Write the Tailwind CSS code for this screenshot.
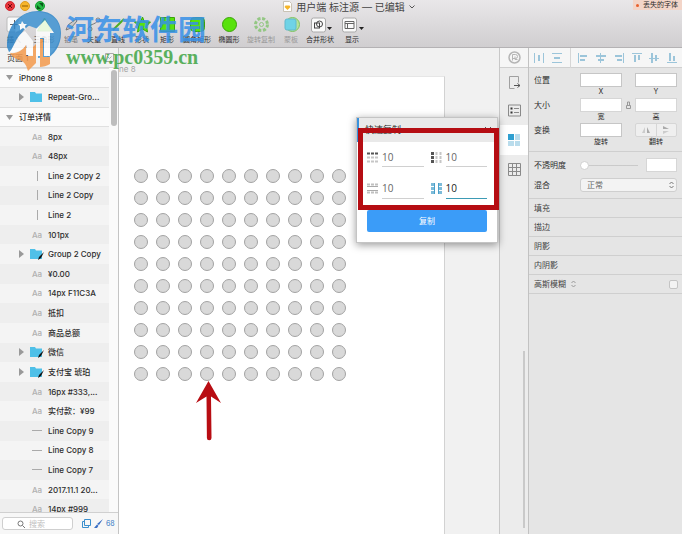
<!DOCTYPE html>
<html lang="zh-CN">
<head>
    <meta charset="UTF-8">
    <meta name="viewport" content="width=device-width, initial-scale=1.0">
    <title>用户端 标注源</title>
    <script src="https://cdn.jsdelivr.net/npm/@tailwindcss/browser@4"></script>
</head>
<body class="h-screen flex flex-col overflow-hidden bg-[#f0f0f0] text-[8px] leading-[10px] text-[#2c2c2c] font-['Inter','Noto_Sans_CJK_SC',sans-serif]">

<!-- Title bar and toolbar -->
<header class="relative shrink-0 h-12 border-b border-[#b4b2b4] bg-linear-to-b from-[#e9e7e9] to-[#d0ced0]">
    <div class="relative flex items-center justify-center h-3 pl-4">
        <div class="absolute left-[5px] top-[1px] flex gap-[5px]">
            <button aria-label="关闭" class="size-[10px] rounded-full bg-[#e8353c] border border-[#cf2830] flex items-center justify-center"><svg class="size-[6px]" viewBox="0 0 6 6" stroke="#6d0a0d"><path d="M1 1l4 4M5 1L1 5"/></svg></button>
            <button aria-label="最小化" class="size-[10px] rounded-full bg-[#f7b52d] border border-[#dd9b22] flex items-center justify-center"><svg class="size-[6px]" viewBox="0 0 6 6" stroke="#8f5a00"><path d="M0 3h6"/></svg></button>
            <button aria-label="全屏" class="size-[10px] rounded-full bg-[#24b945] border border-[#189c35] flex items-center justify-center"><svg class="size-[6px]" viewBox="0 0 6 6" fill="#075c18"><path d="M2 0h4v4zM0 2v4h4z"/></svg></button>
        </div>
        <h1 class="flex items-center gap-1 text-[10px] text-[#444] pt-[1px]">
            <svg class="w-[9px] h-[11px]" viewBox="0 0 9 11"><path d="M.5.5h6l2 2v8h-8z" fill="#fff" stroke="#c9c2b4"/><path d="M2.500 4.500h4l1 1.500-3 3-3-3z" fill="#f6b52a"/></svg>
            <span>用户端 标注源 — 已编辑</span>
            <svg class="w-[6px] h-1" viewBox="0 0 6 4" fill="none" stroke="#555"><path d="M.5.5L3 3 5.500.5"/></svg>
        </h1>
        <div class="absolute right-0 top-0 h-[10px] pl-[3px] pr-1 flex items-center gap-1 bg-[#f3d5c8] text-[7px]"><span class="size-[3px] rounded-full bg-[#e8602c]"></span>丢失的字体</div>
    </div>
    <nav class="flex pt-1 text-[7px] leading-[9px] whitespace-nowrap">
        <button class="w-7 flex flex-col items-center gap-[2px]"><svg class="size-[17px]" viewBox="0 0 17 17"><rect x="1" y="1" width="15" height="15" rx="2" fill="#fafafa" stroke="#bbb"/><path d="M8.500 4v9M4 8.500h9" stroke="#666"/></svg>插入</button>
        <button class="w-8 flex flex-col items-center gap-[2px]"><svg class="size-[17px]" viewBox="0 0 17 17"><path d="M8.500 2l7 13h-14z" fill="#67e01b" stroke="#45a511"/></svg>三角形</button>
        <button class="w-[22px] flex flex-col items-center gap-[2px] text-[#777]"><svg class="size-[17px]" viewBox="0 0 17 17"><path d="M3 14l2-5 8-6 1 2-6 7z" fill="#c9c9c9" stroke="#777"/></svg>铅笔</button>
        <button class="w-6 flex flex-col items-center gap-[2px]"><svg class="size-[17px]" viewBox="0 0 17 17" fill="#fff" stroke="#777"><path d="M3 14C3 6 8 11 13 3" fill="none"/><circle cx="4" cy="13" r="2"/><circle cx="12" cy="4" r="2"/></svg>矢量</button>
        <button class="w-6 flex flex-col items-center gap-[2px]"><svg class="size-[17px]" viewBox="0 0 17 17"><path d="M3 14L14 3" stroke="#4fae22" stroke-width="2"/></svg>直线</button>
        <button class="w-6 flex flex-col items-center gap-[2px]"><svg class="size-[17px]" viewBox="0 0 17 17"><path d="M8.500 1l2 5 6 0-4 4 1 6-5-3-5 3 1-6-4-4h6z" fill="#58e20d" stroke="#3ba508"/></svg>形状</button>
        <button class="w-[26px] flex flex-col items-center gap-[2px]"><svg class="size-[17px]" viewBox="0 0 17 17"><path d="M1.500 1.500h14v14h-14z" fill="#58e20d" stroke="#3ba508"/></svg>矩形</button>
        <button class="w-[34px] flex flex-col items-center gap-[2px]"><svg class="size-[17px]" viewBox="0 0 17 17"><rect x="1.500" y="1.500" width="14" height="14" rx="4" fill="#58e20d" stroke="#3ba508"/></svg>圆角矩形</button>
        <button class="w-[30px] flex flex-col items-center gap-[2px]"><svg class="size-[17px]" viewBox="0 0 17 17"><circle cx="8.500" cy="8.500" r="7" fill="#58e20d" stroke="#3ba508"/></svg>椭圆形</button>
        <button class="w-[34px] flex flex-col items-center gap-[2px] text-[#999]"><svg class="size-[17px]" viewBox="0 0 17 17" fill="none" stroke="#93c783"><circle cx="8.500" cy="8.500" r="6" stroke-width="3" stroke-dasharray="3 1.700"/><circle cx="8.500" cy="8.500" r="2"/></svg>旋转复制</button>
        <button class="w-[26px] flex flex-col items-center gap-[2px] text-[#999]"><svg class="size-[17px]" viewBox="0 0 17 17"><circle cx="9.500" cy="8.500" r="7" fill="#b5e39b" stroke="#7fc264"/><rect x="2" y="3" width="11" height="11" rx="2" fill="#6fd3e6" stroke="#62b9cd"/></svg>蒙板</button>
        <button class="w-8 flex flex-col items-center gap-[2px]"><svg class="w-[23px] h-[17px]" viewBox="0 0 23 17"><rect x="2.500" y="2" width="14" height="14" rx="2" fill="#fafafa" stroke="#aaa"/><rect x="5.500" y="7" width="5" height="5" fill="none" stroke="#444"/><circle cx="10.500" cy="8" r="3" fill="none" stroke="#444"/><path d="M18 11h5l-2.500 3z" fill="#222"/></svg>合并形状</button>
        <button class="w-8 flex flex-col items-center gap-[2px]"><svg class="w-[23px] h-[17px]" viewBox="0 0 23 17"><rect x="1.500" y="2" width="14" height="14" rx="2" fill="#fafafa" stroke="#aaa"/><path d="M4 5.500h9v7H4zM4 7.500h9M6.500 7.500v5" fill="none" stroke="#666"/><path d="M18 11h5l-2.500 3z" fill="#222"/></svg>显示</button>
    </nav>
</header>

<main class="relative flex flex-1 min-h-0">
    <!-- Layers -->
    <aside class="w-[119px] shrink-0 flex flex-col bg-[#fafafa] border-r border-[#c4c4c4]">
        <div class="h-5 shrink-0 flex items-center justify-between pl-[7px] pr-1 bg-[#f3f3f3] border-b border-[#d6d6d6]">页面 1
            <svg class="size-[9px]" viewBox="0 0 9 9" fill="none" stroke="#aaa"><path d="M.5.500h8v8h-8zM2.500 3.500l2 2 2-2"/></svg>
        </div>
        <div class="flex flex-1 min-h-0 overflow-hidden">
            <ul id="layers" class="flex-1 min-w-0 h-[451px] grid auto-rows-fr font-medium"></ul>
            <div class="w-[9px] flex justify-center pt-[2px]"><div class="w-[6px] h-[56px] rounded-full bg-[#bdbdbd]"></div></div>
        </div>
        <div class="h-[22px] shrink-0 flex items-center gap-[3px] pl-[2px] pr-1 bg-[#f7f7f7] border-t border-[#d0d0d0] text-[#3477c4]">
            <label class="flex items-center gap-1 w-[71px] h-[13px] pl-[14px] shrink-0 rounded-[3px] border border-[#cfcfcf] bg-white mr-[6px]">
                <svg class="size-2 shrink-0" viewBox="0 0 8 8" fill="none" stroke="#777"><circle cx="3.500" cy="3.500" r="2.500"/><path d="M5.500 5.500L8 8"/></svg>
                <input type="text" aria-label="搜索" placeholder="搜索" class="w-10 outline-none placeholder:text-[#c0c0c0]">
            </label>
            <svg class="size-[9px] shrink-0" viewBox="0 0 9 9" fill="none" stroke="#3b8fcd"><path d="M2.500.5h6v6h-6z"/><path d="M2.500 2.500h-2v6h6v-2"/></svg>
            <svg class="size-[9px] shrink-0" viewBox="0 0 9 9"><path d="M9 0L5 6 3 5zM3 5.500l1.500 1.200L3 9H0z" fill="#3b6fc5"/></svg>
            <span class="text-[7px]">68</span>
        </div>
    </aside>

    <!-- Canvas -->
    <section class="relative flex-1 min-w-0 flex flex-col bg-[#f1f1f1] overflow-hidden">
        <div class="h-7 shrink-0 flex items-end pb-[2px] text-[#a5a5a5]">ne 8</div>
        <div class="flex-1 mr-[54px] bg-white border-r border-t border-t-[#e6e6e6] border-r-[#d2d2d2] pt-[92px] pl-[15px]">
            <div id="dots" class="w-[212px] h-[212px] grid grid-cols-[repeat(10,14px)] justify-between content-between"></div>
            <svg class="w-[26px] h-[60px] ml-[62px]" viewBox="0 0 26 60"><path d="M12.500 0L25 22 15 15.500 15.500 57a2.300 2.300 0 0 1-4.600 0L10.500 15.500 0 22z" fill="#b80d13"/></svg>
        </div>
    </section>

    <!-- Plugin strip -->
    <nav class="w-[29px] shrink-0 flex flex-col items-center bg-[#ececec] border-l border-[#c8c8c8]">
        <button aria-label="插件" class="w-full h-5 flex items-center justify-center bg-[#f6f6f6] border-b border-[#cfcfcf]"><svg class="size-[13px]" viewBox="0 0 13 13" fill="none" stroke="#b5b5b5"><circle cx="6.500" cy="6.500" r="5.500" stroke-width="1.500"/><path d="M4.500 9.500v-6h3a2 2 0 0 1 0 4h-3M7 5.500v3h2.500"/></svg></button>
        <button aria-label="导出" class="w-full h-[28px] flex items-center justify-center"><svg class="size-[13px]" viewBox="0 0 13 13" fill="none" stroke="#a0a0a0"><path d="M10.500 6.500v-6h-9v12h5" /><path d="M6 9.500h6M9.500 7.500l2.500 2-2.500 2" stroke="#555"/></svg></button>
        <button aria-label="列表" class="w-full h-[29px] flex items-center justify-center"><svg class="size-[13px]" viewBox="0 0 13 13" fill="none" stroke="#8a8a8a"><path d="M.5 1h12v11H.5z"/><path d="M6 4.500h5M6 8.500h5"/><path d="M2.500 4.500h2M2.500 8.500h2" stroke="#333" stroke-width="2"/></svg></button>
        <button aria-label="快速复制" class="w-full h-[30px] flex items-center justify-center bg-white"><svg class="size-[12px]" viewBox="0 0 12 12" fill="#b9dcec"><path d="M0 0h6v6H0z" fill="#2f9fd0"/><path d="M7 0h5v6H7zM0 7h6v5H0zM7 7h5v5H7z"/></svg></button>
        <button aria-label="网格" class="w-full h-[29px] flex items-center justify-center"><svg class="size-[13px]" viewBox="0 0 13 13" fill="none" stroke="#8a8a8a"><path d="M.5.500h12v12H.5zM4.500 0v13M8.500 0v13M0 4.500h13M0 8.500h13"/></svg></button>
        <div class="mt-auto mb-[6px] mr-[3px] w-[2px] h-[177px] self-end bg-[#c9c9c9]"></div>
    </nav>

    <!-- Inspector -->
    <aside class="w-[154px] shrink-0 bg-[#e5e5e5] border-l border-[#c2c2c2]">
        <div class="h-5 flex items-center justify-between px-[5px] bg-[#f6f6f6] border-b border-[#d0d0d0]">
            <button aria-label="水平分布"><svg class="size-[10px]" viewBox="0 0 10 10" fill="#9cc5da"><path d="M0 0h1v10H0zM9 0h1v10H9zM4 2h2v6H4z"/></svg></button>
            <button aria-label="垂直分布"><svg class="size-[10px]" viewBox="0 0 10 10" fill="#9cc5da"><path d="M0 0h10v1H0zM0 9h10v1H0zM2 4h6v2H2z"/></svg></button>
            <span class="w-px h-5 bg-[#d6d6d6]"></span>
            <button aria-label="左对齐"><svg class="size-[10px]" viewBox="0 0 10 10" fill="#9cc5da"><path d="M0 0h1v10H0zM2 2h7v2H2zM2 6h5v2H2z"/></svg></button>
            <button aria-label="水平居中"><svg class="size-[10px]" viewBox="0 0 10 10" fill="#9cc5da"><path d="M4 0h1v10H4zM0 2h10v2H0zM2 6h6v2H2z"/></svg></button>
            <button aria-label="右对齐"><svg class="size-[10px]" viewBox="0 0 10 10" fill="#9cc5da"><path d="M9 0h1v10H9zM1 2h7v2H1zM3 6h5v2H3z"/></svg></button>
            <button aria-label="顶对齐"><svg class="size-[10px]" viewBox="0 0 10 10" fill="#9cc5da"><path d="M0 0h10v1H0zM2 2h2v7H2zM6 2h2v5H6z"/></svg></button>
            <button aria-label="垂直居中"><svg class="size-[10px]" viewBox="0 0 10 10" fill="#9cc5da"><path d="M0 5h10v1H0zM2 0h2v10H2zM6 2h2v6H6z"/></svg></button>
            <button aria-label="底对齐"><svg class="size-[10px]" viewBox="0 0 10 10" fill="#9cc5da"><path d="M0 9h10v1H0zM2 0h2v8H2zM6 3h2v5H6z"/></svg></button>
        </div>
        <div class="grid grid-cols-[46px_1fr_13px_1fr] pl-[5px] pr-[5px] pt-[5px] pb-[3px] border-b border-[#cfcfcf] text-[7px]">
            <span class="text-[8px] leading-[14px]">位置</span>
            <label class="h-[25px] flex flex-col items-center"><input class="w-full h-[14px] bg-white border border-[#c6c6c6]">X</label>
            <span></span>
            <label class="h-[25px] flex flex-col items-center"><input class="w-full h-[14px] bg-white border border-[#c6c6c6]">Y</label>
            <span class="text-[8px] leading-[14px]">大小</span>
            <label class="h-[25px] flex flex-col items-center"><input class="w-full h-[14px] bg-white border border-[#d6d6d6]">宽</label>
            <svg class="w-[5px] h-[8px] mt-[3px] mx-auto" viewBox="0 0 5 8" fill="none" stroke="#999"><path d="M1.500 4V1h2v3M.5 4.500h4v3h-4z"/></svg>
            <label class="h-[25px] flex flex-col items-center"><input class="w-full h-[14px] bg-white border border-[#d6d6d6]">高</label>
            <span class="text-[8px] leading-[14px]">变换</span>
            <label class="h-[25px] flex flex-col items-center"><input class="w-full h-[14px] bg-white border border-[#c6c6c6]">旋转</label>
            <span></span>
            <div class="h-[25px] flex flex-col items-center">
                <div class="w-full h-[14px] flex rounded-[2px] border border-[#d6d6d6] bg-[#efefef]">
                    <button aria-label="水平翻转" class="flex-1 flex items-center justify-center border-r border-[#d6d6d6]"><svg class="size-2" viewBox="0 0 8 8"><path d="M3 1v6H0z" fill="#ccc"/><path d="M5 1v6h3z" fill="#aaa"/></svg></button>
                    <button aria-label="垂直翻转" class="flex-1 flex items-center justify-center"><svg class="size-2" viewBox="0 0 8 8"><path d="M1 3h6L1 0z" fill="#aaa"/><path d="M1 5h6L1 8z" fill="#ccc"/></svg></button>
                </div>
                翻转
            </div>
        </div>
        <div class="px-[5px] pb-[6px] border-b border-[#cfcfcf]">
            <div class="h-[26px] flex items-center">
                <label for="opacity" class="w-[46px]">不透明度</label>
                <input id="opacity" type="range" value="0" class="w-[58px] h-[9px] appearance-none bg-linear-to-b from-transparent from-45% via-[#bdbdbd] via-45% to-transparent to-60% [&::-webkit-slider-thumb]:appearance-none [&::-webkit-slider-thumb]:size-[9px] [&::-webkit-slider-thumb]:rounded-full [&::-webkit-slider-thumb]:bg-white [&::-webkit-slider-thumb]:border [&::-webkit-slider-thumb]:border-[#d0d0d0]">
                <input aria-label="不透明度数值" class="ml-auto w-[31px] h-[14px] bg-white border border-[#d6d6d6]">
            </div>
            <div class="flex items-center">
                <label for="blend" class="w-[46px]">混合</label>
                <div class="relative flex-1">
                    <select id="blend" class="w-full h-[14px] pl-[6px] appearance-none rounded-[3px] border border-[#cfcfcf] bg-[#f3f3f3] text-[#666]"><option>正常</option></select>
                    <svg class="absolute right-[3px] top-[3px] w-[5px] h-2" viewBox="0 0 5 8" fill="none" stroke="#777"><path d="M.5 3l2-2 2 2M.5 5l2 2 2-2"/></svg>
                </div>
            </div>
        </div>
        <div class="text-[#444]">
            <div class="h-[19px] flex items-center px-[5px] border-b border-[#cfcfcf]">填充</div>
            <div class="h-[19px] flex items-center px-[5px] border-b border-[#cfcfcf]">描边</div>
            <div class="h-[19px] flex items-center px-[5px] border-b border-[#cfcfcf]">阴影</div>
            <div class="h-[19px] flex items-center px-[5px] border-b border-[#cfcfcf]">内阴影</div>
            <div class="h-[19px] flex items-center pl-[5px] pr-1 border-b border-[#cfcfcf]">
                <label for="blur">高斯模糊</label>
                <svg class="ml-[5px] w-[5px] h-2" viewBox="0 0 5 8" fill="none" stroke="#999"><path d="M.5 3l2-2 2 2M.5 5l2 2 2-2"/></svg>
                <input id="blur" type="checkbox" class="ml-auto size-[9px] appearance-none rounded-[2px] border border-[#c4c4c4] bg-[#f3f3f3]">
            </div>
        </div>
    </aside>

    <!-- Quick copy panel -->
    <div class="absolute right-[184px] top-[69px] w-[142px] h-[126px] flex flex-col bg-white border border-[#c4c4c4] shadow-[0_2px_8px_rgba(0,0,0,0.4)]">
        <div class="h-6 shrink-0 flex items-center justify-between px-[6px] border-l-2 border-[#3a92dc] bg-[#e9e9e9] text-[9px]">快速复制
            <button aria-label="关闭面板"><svg class="size-[6px]" viewBox="0 0 6 6" stroke="#555"><path d="M0 0l6 6M6 0L0 6"/></svg></button>
        </div>
        <div class="flex-1 grid grid-cols-2 gap-x-[7px] px-[10px] pt-[5px] text-[10px] text-[#666] font-['Open_Sans','Noto_Sans_CJK_SC',sans-serif]">
            <label class="h-5 flex items-center gap-1"><svg class="size-[11px] shrink-0" viewBox="0 0 11 11"><path d="M0 1.500h11" stroke="#555" stroke-width="2" stroke-dasharray="3 1"/><path d="M0 5.500h11M0 9.500h11" stroke="#c6c6c6" stroke-width="2" stroke-dasharray="3 1"/></svg><input aria-label="行数" value="10" class="w-0 flex-1 h-5 border-b border-[#d0d0d0] outline-none"></label>
            <label class="h-5 flex items-center gap-1"><svg class="size-[11px] shrink-0" viewBox="0 0 11 11"><path d="M1.500 0v11" stroke="#555" stroke-width="3" stroke-dasharray="3 1"/><path d="M5.500 0v11M9.500 0v11" stroke="#c6c6c6" stroke-width="2" stroke-dasharray="3 1"/></svg><input aria-label="列数" value="10" class="w-0 flex-1 h-5 border-b border-[#d0d0d0] outline-none"></label>
            <label class="h-5 flex items-center gap-1"><svg class="size-[11px] shrink-0" viewBox="0 0 11 11"><path d="M0 1.500h11M0 9.500h11" stroke="#c0c0c0" stroke-width="2" stroke-dasharray="3 1"/><path d="M0 3.500h11M0 7.500h11" stroke="#aaa"/></svg><input aria-label="行间距" value="10" class="w-0 flex-1 h-5 border-b border-[#d0d0d0] outline-none"></label>
            <label class="h-5 flex items-center gap-1"><svg class="size-[11px] shrink-0" viewBox="0 0 11 11"><path d="M1.500 0v11M9.500 0v11" stroke="#7dbbd9" stroke-width="3" stroke-dasharray="3 1"/><path d="M3.500 0v11M7.500 0v11" stroke="#4a9fc8"/></svg><input aria-label="列间距" value="10" class="w-0 flex-1 h-5 border-b border-[#3d9bb5] text-[#222] outline-none"></label>
        </div>
        <button class="h-[22px] shrink-0 mx-[10px] mb-[10px] rounded-[2px] bg-[#3b9cf8] text-white">复制</button>
    </div>
    <!-- Highlight frame -->
    <div class="absolute right-[183px] top-[80px] w-[141px] h-[82px] border-[5px] border-[#b50d13]"></div>
</main>

<!-- Site watermark -->
<div class="absolute left-[7px] top-[11px] flex items-start gap-[5px] opacity-85 pointer-events-none">
    <svg class="w-[54px] h-[60px]" viewBox="0 0 54 60">
        <path d="M0 36C-1 14 14 0 31 0 45 0 54 9 54 22 54 34 48 44 36 50V50L50 30C52 18 44 10 34 10 20 12 12 22 9 36L2 41z" fill="#2f86c9"/>
        <path d="M18 3C32-2 52 2 53 20 54 32 46 42 39 46L31 47V18L20 14 8 22C9 13 13 6 18 3z" fill="#3f93d2"/>
        <path d="M3 41C8 33 10 24 18 20L26 30V44H20V34C15 39 9 42 3 41z" fill="#fff"/>
        <path d="M29 18L38 9 47 22H43V45H37V27H33V45H29z" fill="#fff"/>
        <path d="M3 42C10 43 16 39 19 34V45H26V36L29 33V52L21 60C20 56 18 51 13 49 9 48 5 46 3 42z" fill="#f39a4d"/>
        <path d="M33 28H36V46H43V53C40 55 36 56 33 56z" fill="#f39a4d"/>
        <path d="M15 10l2 3 3 0-2 2 1 4-3-2-3 2 0-4-2-2 3 0z" fill="#fff"/>
    </svg>
    <div class="pt-[3px] whitespace-nowrap">
        <p class="text-[28px] leading-[32px] font-bold text-[#3790e8]">河东软件园</p>
        <p class="text-[20px] leading-[22px] font-bold text-[#3fa545] font-['Liberation_Serif',serif]">www.pc0359.cn</p>
    </div>
</div>

<script>
    const layers = [
        ['page', 'iPhone 8'], ['folder', 'Repeat-Gro...'], ['page', '订单详情'], ['text', '8px'], ['text', '48px'],
        ['vline', 'Line 2 Copy 2'], ['vline', 'Line 2 Copy'], ['vline', 'Line 2'], ['text', '101px'],
        ['slice', 'Group 2 Copy'], ['text', '¥0.00'], ['text', '14px F11C3A'], ['text', '抵扣'], ['text', '商品总额'],
        ['slice', '微信'], ['slice', '支付宝 琥珀'], ['text', '16px #333,...'], ['text', '实付款：¥99'],
        ['hline', 'Line Copy 9'], ['hline', 'Line Copy 8'], ['hline', 'Line Copy 7'], ['text', '2017.11.1 20...'], ['text', '14px #999']
    ];
    const arrow = '<svg class="w-[5px] h-2 shrink-0" viewBox="0 0 5 8"><path d="M0 0l5 4-5 4z" fill="#999"/></svg>';
    const folder = '<path d="M0 1h5l1 1.500h6V11H0z" fill="#4fc0e8"/>';
    const icons = {
        text: '<span class="text-[#b0b0b0]">Aa</span>',
        vline: '<span class="w-px h-[10px] bg-[#aaa]"></span>',
        hline: '<span class="w-[10px] h-px bg-[#aaa]"></span>',
        folder: '<svg class="w-[14px] h-3" viewBox="0 0 14 12">' + folder + '</svg>',
        slice: '<svg class="w-[14px] h-3" viewBox="0 0 14 12">' + folder + '<path d="M14 4l-3 6-3 2 1-3z" fill="#111"/></svg>'
    };

    document.getElementById('layers').innerHTML = layers.map(([kind, name], i) => {
        if (kind === 'page') {
            return `<li class="flex items-center gap-[6px] pl-[6px] bg-[#fbfbfb] border-y border-[#e0e0e0]">
                <svg class="w-[7px] h-[5px]" viewBox="0 0 7 5"><path d="M0 0h7L3.500 5z" fill="#999"/></svg>${name}</li>`;
        }
        const shade = i % 2 ? 'bg-[#f4f4f4]' : 'bg-[#eeeeee]';
        const hasArrow = kind === 'folder' || kind === 'slice';
        return `<li class="flex items-center pl-[19px] whitespace-nowrap ${shade}">
            <span class="w-[11px] shrink-0">${hasArrow ? arrow : ''}</span>
            <span class="w-[14px] mr-1 shrink-0 flex justify-center">${icons[kind]}</span>${name}</li>`;
    }).join('');

    document.getElementById('dots').innerHTML =
        '<span class="size-[14px] rounded-full bg-[#d9d9d9] border border-[#a3a3a3]"></span>'.repeat(100);
</script>
</body>
</html>
